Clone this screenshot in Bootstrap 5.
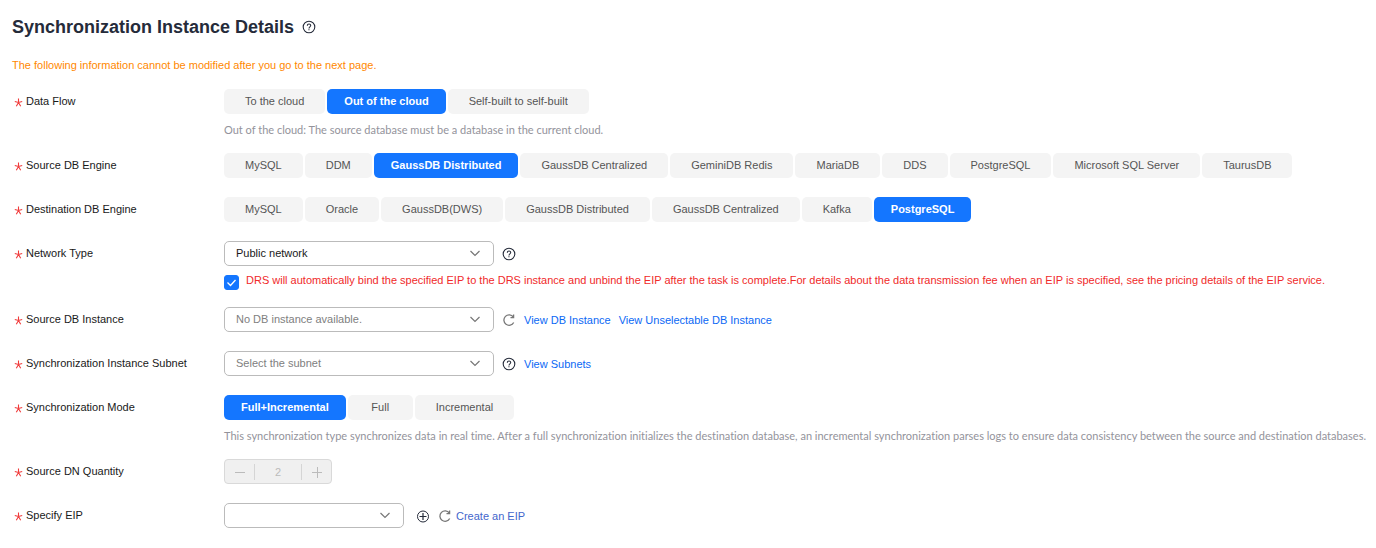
<!DOCTYPE html>
<html lang="en">
<head>
<meta charset="utf-8">
<meta name="viewport" content="width=device-width, initial-scale=1">
<title>Synchronization Instance Details</title>
<link href="https://cdn.jsdelivr.net/npm/bootstrap@5.3.0/dist/css/bootstrap.min.css" rel="stylesheet">
<style>
  body { font-family: "Liberation Sans", Arial, sans-serif; font-size: 11px; line-height: 16px; color: #191919; background: #fff; }
  main { padding: 15px 4px 16px 12px; }
  h1 { font-size: 18px; line-height: 24px; color: #252b3a; }
  .page-title { margin-bottom: 18px; }
  .notice { color: #ff8800; }
  .form-line { display: grid; grid-template-columns: 212px minmax(0, 1fr); align-items: start; margin-bottom: 19px; }
  .field-name { line-height: 25px; display: flex; align-items: center; gap: 3px; padding-left: 2px; }
  .field-name svg { margin-top: 2px; flex: none; }
  .choices { display: flex; flex-wrap: wrap; gap: 2px; }
  .choices .btn { --bs-btn-font-size: 11px; --bs-btn-line-height: 25px; --bs-btn-padding-x: 21px; --bs-btn-padding-y: 0; --bs-btn-border-width: 0; --bs-btn-border-radius: 5px; --bs-btn-color: #555; --bs-btn-bg: #f4f4f4; --bs-btn-hover-bg: #e9e9e9; --bs-btn-active-bg: #1476ff; --bs-btn-active-color: #fff; min-width: 65px; }
  .choices .btn.active { --bs-btn-padding-x: 17px; font-weight: 700; }
  .hint { font-family: Lato, "Liberation Sans", sans-serif; font-variant-ligatures: none; color: #93939b; line-height: 12px; padding-top: 10px; margin-bottom: -2px; }
  .controls { display: flex; align-items: center; min-height: 25px; }
  .picker.form-select { width: 270px; height: 25px; padding: 0 28px 0 11px; font-size: 11px; line-height: 23px; color: #191919; border: 1px solid #bbb; border-radius: 5px;
    background: #fff url("data:image/svg+xml,%3Csvg xmlns='http://www.w3.org/2000/svg' viewBox='0 0 12 12'%3E%3Cpath fill='none' stroke='%23777' stroke-width='1.2' d='M1.500 3 6 7.500l4.500-4.500'/%3E%3C/svg%3E") no-repeat right 12px center / 12px 12px; }
  .picker.form-select.unset { color: #808080; }
  .picker.form-select.narrow { width: 180px; }
  .icon-btn { border: 0; padding: 0; background: none; display: flex; color: #252b3a; }
  .icon-btn.soft { color: #777; }
  a { color: #0b68f5; text-decoration: none; }
  a.muted-link { color: #4466cc; }
  .agree { display: flex; gap: 7px; padding-top: 7px; height: 22px; color: #f02a2a; line-height: 14px; }
  .agree .form-check-input { width: 15px; height: 15px; margin: 2px 0 0; border-radius: 3px; flex: none; }
  .agree .form-check-input:checked { background-color: #1476ff; border-color: #1476ff;
    background-image: url("data:image/svg+xml,%3Csvg xmlns='http://www.w3.org/2000/svg' viewBox='0 0 13 13'%3E%3Cpath fill='none' stroke='%23fff' stroke-width='1.300' d='m2.500 6.500 3 3 5-5.500'/%3E%3C/svg%3E"); }
  .stepper { display: flex; align-items: center; width: 108px; height: 25px; border: 1px solid #d9d9d9; border-radius: 4px; background: #f0f0f0; color: #bbb; }
  .stepper button { border: 0; background: none; color: inherit; padding: 0; width: 29px; height: 16px; display: flex; align-items: center; justify-content: center; }
  .stepper input { flex: 1; min-width: 0; height: 16px; padding: 0; text-align: center; color: #bbb; background: none; border: solid #d5d5d5; border-width: 0 1px; }
</style>
</head>
<body>
<svg class="d-none" aria-hidden="true">
  <symbol id="star" viewBox="0 0 9 9"><path d="M4.500.5v4M.8 3.500l3.700 1 3.700-1M2.300 8.300l2.200-3.800 2.200 3.800" fill="none" stroke="#f03a3a" stroke-width="1.100"/></symbol>
  <symbol id="help" viewBox="0 0 14 14"><circle cx="7" cy="7" r="5.800" fill="none" stroke="currentColor" stroke-width="1.100"/><path d="M5.300 5.700c0-2.200 3.400-2.200 3.400-.1C8.700 6.900 7 6.900 7 8.400" fill="none" stroke="currentColor" stroke-width="1.100"/><path d="M6.400 9.200h1.100v1.100H6.400z" fill="currentColor"/></symbol>
  <symbol id="reload" viewBox="0 0 14 14"><path d="M11.300 4A5.200 5.200 0 1 0 11.700 9.500M11.600 1.400v3.200H8.500" fill="none" stroke="currentColor" stroke-width="1.300"/></symbol>
  <symbol id="add" viewBox="0 0 14 14"><circle cx="7" cy="7.500" r="5.500" fill="none" stroke="currentColor" stroke-width="1"/><path d="M7 4v7M3.500 7.500h7" stroke="currentColor" stroke-width="1.200"/></symbol>
</svg>
<main>
  <header class="page-title d-flex align-items-center gap-2">
    <h1 class="fw-bold mb-0">Synchronization Instance Details</h1>
    <button type="button" class="icon-btn" aria-label="Help"><svg width="14" height="14"><use href="#help"/></svg></button>
  </header>
  <p class="notice mb-3">The following information cannot be modified after you go to the next page.</p>

  <form>
    <div class="form-line">
      <div class="field-name"><svg width="9" height="9"><use href="#star"/></svg><span id="flow">Data Flow</span></div>
      <div>
        <div class="choices" role="group" aria-labelledby="flow">
          <button type="button" class="btn">To the cloud</button>
          <button type="button" class="btn active">Out of the cloud</button>
          <button type="button" class="btn">Self-built to self-built</button>
        </div>
        <div class="hint">Out of the cloud: The source database must be a database in the current cloud.</div>
      </div>
    </div>
    <div class="form-line">
      <div class="field-name"><svg width="9" height="9"><use href="#star"/></svg><span id="source">Source DB Engine</span></div>
      <div class="choices" role="group" aria-labelledby="source">
        <button type="button" class="btn">MySQL</button>
        <button type="button" class="btn">DDM</button>
        <button type="button" class="btn active">GaussDB Distributed</button>
        <button type="button" class="btn">GaussDB Centralized</button>
        <button type="button" class="btn">GeminiDB Redis</button>
        <button type="button" class="btn">MariaDB</button>
        <button type="button" class="btn">DDS</button>
        <button type="button" class="btn">PostgreSQL</button>
        <button type="button" class="btn">Microsoft SQL Server</button>
        <button type="button" class="btn">TaurusDB</button>
      </div>
    </div>
    <div class="form-line">
      <div class="field-name"><svg width="9" height="9"><use href="#star"/></svg><span id="dest">Destination DB Engine</span></div>
      <div class="choices" role="group" aria-labelledby="dest">
        <button type="button" class="btn">MySQL</button>
        <button type="button" class="btn">Oracle</button>
        <button type="button" class="btn">GaussDB(DWS)</button>
        <button type="button" class="btn">GaussDB Distributed</button>
        <button type="button" class="btn">GaussDB Centralized</button>
        <button type="button" class="btn">Kafka</button>
        <button type="button" class="btn active">PostgreSQL</button>
      </div>
    </div>
    <div class="form-line">
      <div class="field-name"><svg width="9" height="9"><use href="#star"/></svg><label for="network">Network Type</label></div>
      <div>
        <div class="controls gap-2">
          <select id="network" class="form-select picker"><option>Public network</option></select>
          <button type="button" class="icon-btn" aria-label="Help"><svg width="14" height="14"><use href="#help"/></svg></button>
        </div>
        <div class="agree">
          <input class="form-check-input" type="checkbox" id="bind" checked>
          <label for="bind">DRS will automatically bind the specified EIP to the DRS instance and unbind the EIP after the task is complete.For details about the data transmission fee when an EIP is specified, see the pricing details of the EIP service.</label>
        </div>
      </div>
    </div>
    <div class="form-line">
      <div class="field-name"><svg width="9" height="9"><use href="#star"/></svg><label for="instance">Source DB Instance</label></div>
      <div class="controls gap-2">
        <select id="instance" class="form-select picker unset"><option>No DB instance available.</option></select>
        <button type="button" class="icon-btn soft" aria-label="Refresh"><svg width="14" height="14"><use href="#reload"/></svg></button>
        <a href="#">View DB Instance</a>
        <a href="#">View Unselectable DB Instance</a>
      </div>
    </div>
    <div class="form-line">
      <div class="field-name"><svg width="9" height="9"><use href="#star"/></svg><label for="subnet">Synchronization Instance Subnet</label></div>
      <div class="controls gap-2">
        <select id="subnet" class="form-select picker unset"><option>Select the subnet</option></select>
        <button type="button" class="icon-btn" aria-label="Help"><svg width="14" height="14"><use href="#help"/></svg></button>
        <a href="#">View Subnets</a>
      </div>
    </div>
    <div class="form-line">
      <div class="field-name"><svg width="9" height="9"><use href="#star"/></svg><span id="mode">Synchronization Mode</span></div>
      <div>
        <div class="choices" role="group" aria-labelledby="mode">
          <button type="button" class="btn active">Full+Incremental</button>
          <button type="button" class="btn">Full</button>
          <button type="button" class="btn">Incremental</button>
        </div>
        <div class="hint">This synchronization type synchronizes data in real time. After a full synchronization initializes the destination database, an incremental synchronization parses logs to ensure data consistency between the source and destination databases.</div>
      </div>
    </div>
    <div class="form-line">
      <div class="field-name"><svg width="9" height="9"><use href="#star"/></svg><label for="quantity">Source DN Quantity</label></div>
      <div class="stepper">
        <button type="button" disabled aria-label="Decrease"><svg width="12" height="12"><path d="M1 6.500h10" stroke="currentColor"/></svg></button>
        <input id="quantity" type="text" value="2" disabled>
        <button type="button" disabled aria-label="Increase"><svg width="12" height="12"><path d="M1 6.500h10M6.500 1v11" stroke="currentColor"/></svg></button>
      </div>
    </div>
    <div class="form-line mb-0">
      <div class="field-name"><svg width="9" height="9"><use href="#star"/></svg><label for="eip">Specify EIP</label></div>
      <div class="controls gap-2">
        <select id="eip" class="form-select picker narrow"><option></option></select>
        <button type="button" class="icon-btn ms-1" aria-label="Add"><svg width="14" height="14"><use href="#add"/></svg></button>
        <div class="d-flex align-items-center gap-1">
          <button type="button" class="icon-btn soft" aria-label="Refresh"><svg width="14" height="14"><use href="#reload"/></svg></button>
          <a href="#" class="muted-link">Create an EIP</a>
        </div>
      </div>
    </div>
  </form>
</main>
<script src="https://cdn.jsdelivr.net/npm/bootstrap@5.3.0/dist/js/bootstrap.bundle.min.js"></script>
</body>
</html>
